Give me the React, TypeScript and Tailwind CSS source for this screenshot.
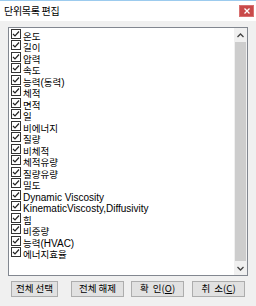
import React from "react";

const items = [
  "온도",
  "길이",
  "압력",
  "속도",
  "능력(동력)",
  "체적",
  "면적",
  "일",
  "비에너지",
  "질량",
  "비체적",
  "체적유량",
  "질량유량",
  "밀도",
  "Dynamic Viscosity",
  "KinematicViscosty,Diffusivity",
  "힘",
  "비중량",
  "능력(HVAC)",
  "에너지효율",
];

function Label({ text }: { text: string }) {
  const parts = text.split(/([\uAC00-\uD7A3]+)/).filter((p) => p.length > 0);
  return (
    <span className="whitespace-nowrap leading-none">
      {parts.map((p, i) =>
        /[\uAC00-\uD7A3]/.test(p) ? (
          <span key={i} className="font-['Noto_Sans_CJK_KR',sans-serif] text-[9.5px]">
            {p}
          </span>
        ) : (
          <span key={i} className="font-['Liberation_Sans',sans-serif] text-[10px]">
            {p}
          </span>
        )
      )}
    </span>
  );
}

function Check() {
  return (
    <svg width="10" height="10" viewBox="0 0 10 10" className="shrink-0">
      <rect x="0.5" y="0.5" width="9" height="9" fill="#fff" stroke="#333" />
      <path d="M2 5 L4 7 L8 2.5" fill="none" stroke="#222" strokeWidth="1.2" />
    </svg>
  );
}

function Btn({ w, children, ml }: { w: string; children: React.ReactNode; ml: string }) {
  return (
    <div
      className={`${w} ${ml} h-[16px] bg-[#e1e1e1] border border-[#adadad] flex items-center justify-center text-[9.5px] text-black font-['Noto_Sans_CJK_KR',sans-serif] leading-none whitespace-nowrap`}
    >
      {children}
    </div>
  );
}

export default function App() {
  return (
    <div className="w-[256px] h-[306px] bg-[#f0f0f0] flex flex-col overflow-hidden text-black">
      <div className="h-[21px] shrink-0 bg-white border-t border-[#9ccbee] flex items-center justify-between pl-[4px] pr-[2px]">
        <span className="font-['Noto_Sans_CJK_KR',sans-serif] text-[10px] tracking-[-0.3px] leading-none text-black">
          단위목록 편집
        </span>
        <div className="w-[15px] h-[12px] mb-[1px] bg-[#c94a4a] border border-[#d87070] flex items-center justify-center">
          <svg width="6" height="6" viewBox="0 0 6 6">
            <path d="M0.5 0.5 L5.5 5.5 M5.5 0.5 L0.5 5.5" stroke="#fff" strokeWidth="1.3" />
          </svg>
        </div>
      </div>

      <div className="ml-[8px] mt-[6px] w-[240px] h-[249px] shrink-0 border border-[#828790] bg-white flex">
        <div className="flex-1 flex flex-col pl-[2px] overflow-hidden">
          {items.map((t) => (
            <div key={t} className="h-[11.5px] shrink-0 flex items-center gap-[2px]">
              <Check />
              <Label text={t} />
            </div>
          ))}
        </div>
        <div className="w-[13px] bg-[#f0f0f0] flex flex-col">
          <div className="h-[14px] flex items-center justify-center">
            <svg width="7" height="5" viewBox="0 0 7 5">
              <path d="M0.5 4 L3.5 1 L6.5 4" fill="none" stroke="#444" strokeWidth="1.3" />
            </svg>
          </div>
          <div className="flex-1 mx-[1px] bg-[#cdcdcd]" />
          <div className="h-[14px] flex items-center justify-center">
            <svg width="7" height="5" viewBox="0 0 7 5">
              <path d="M0.5 1 L3.5 4 L6.5 1" fill="none" stroke="#444" strokeWidth="1.3" />
            </svg>
          </div>
        </div>
      </div>

      <div className="mt-[5px] flex">
        <Btn w="w-[47px]" ml="ml-[11px]">전체 선택</Btn>
        <Btn w="w-[53px]" ml="ml-[13px]">전체 해제</Btn>
        <Btn w="w-[53px]" ml="ml-[7px]">
          확&nbsp;&nbsp;인(<span className="underline">O</span>)
        </Btn>
        <Btn w="w-[53px]" ml="ml-[8px]">
          취&nbsp;&nbsp;소(<span className="underline">C</span>)
        </Btn>
      </div>
    </div>
  );
}
